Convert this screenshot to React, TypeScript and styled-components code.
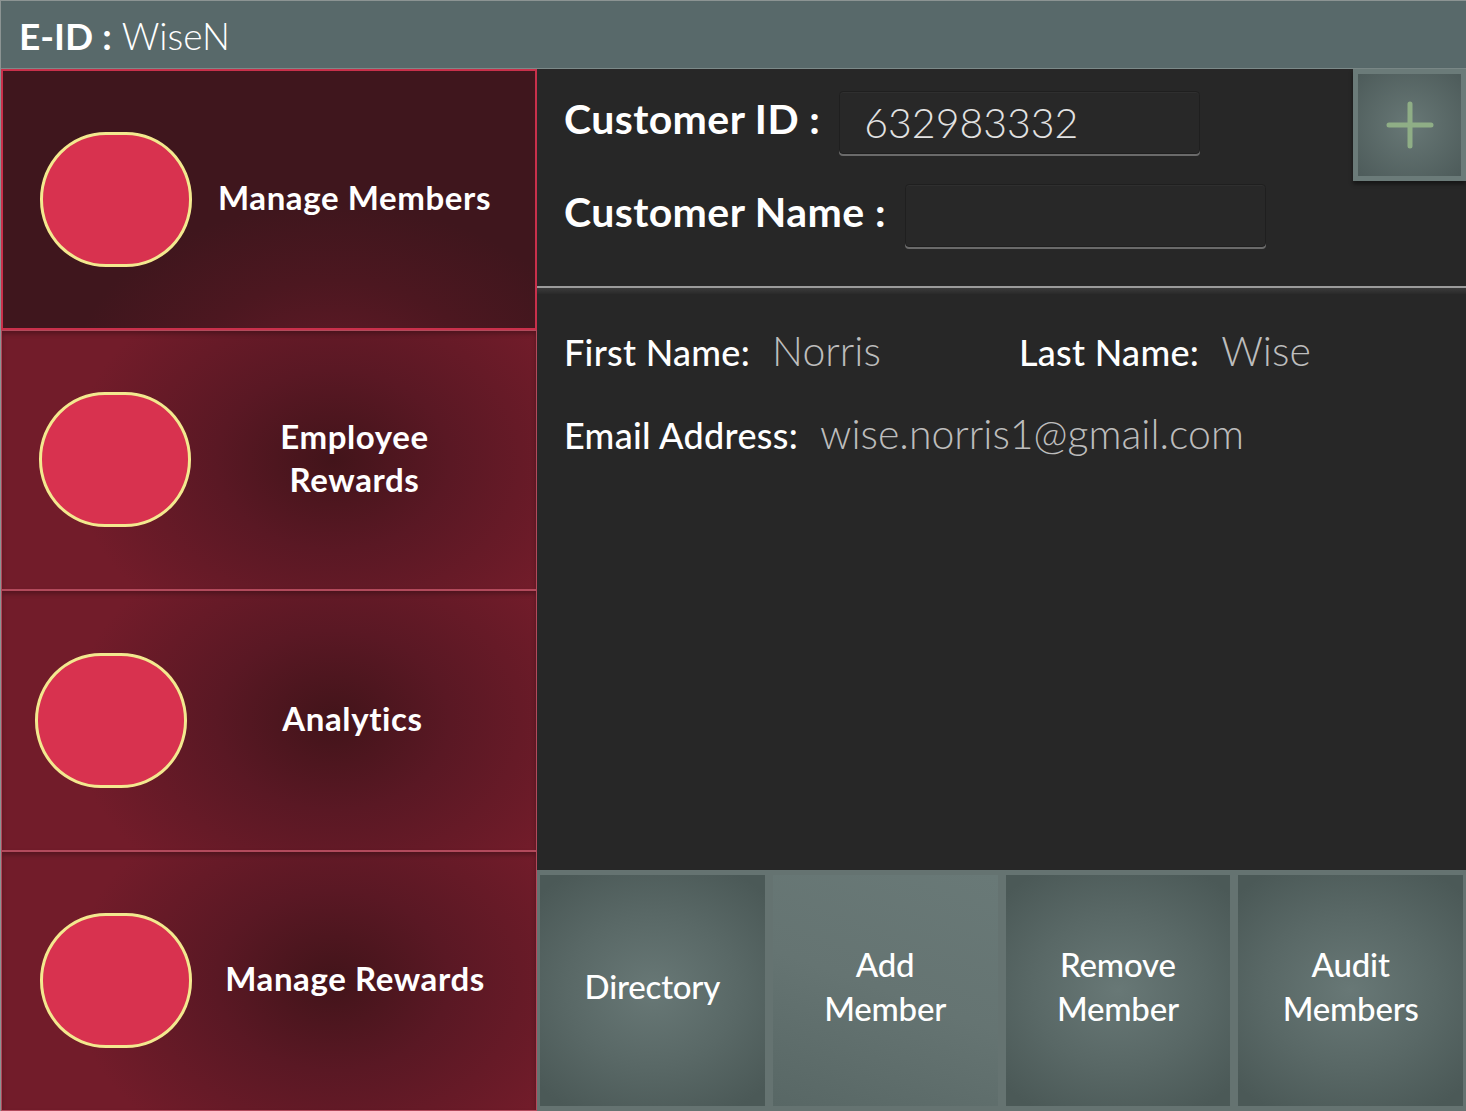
import React from "react";
import styled, { createGlobalStyle } from "styled-components";

const Global = createGlobalStyle`
  html, body { margin: 0; padding: 0; background: #272727; }
  body { font-family: "Lato", "Noto Sans", sans-serif; }
  * { box-sizing: border-box; }
`;

const Screen = styled.div`
  width: 1466px;
  height: 1111px;
  display: grid;
  grid-template-rows: 68px 1fr;
  overflow: hidden;
  border-top: 1px solid #8c9493;
  border-left: 1px solid #8c9493;
`;

const Header = styled.header`
  background: #58696a;
  display: flex;
  align-items: center;
  padding: 2px 0 0 18px;
  color: #ffffff;
  font-size: 37px;
  border-bottom: 1px solid #7c8a89;
`;

const HeaderKey = styled.span`
  font-weight: 700;
  margin-right: 10px;
`;

const HeaderValue = styled.span`
  font-weight: 300;
`;

const Body = styled.div`
  display: grid;
  grid-template-columns: 536px 1fr;
  min-height: 0;
`;

const Nav = styled.nav`
  display: grid;
  grid-template-rows: repeat(4, 1fr);
`;

const NavItem = styled.div<{ $active?: boolean; $offset?: number }>`
  display: flex;
  align-items: center;
  padding-left: ${(p) => p.$offset ?? 37}px;
  background: ${(p) =>
    p.$active
      ? "radial-gradient(ellipse 260px 170px at 62% 118%, #621a27 0%, #4c1720 55%, #3f161d 100%)"
      : "radial-gradient(ellipse 260px 200px at 62% 50%, #42141a 0%, #5a1824 45%, #721c2a 100%)"};
  border: ${(p) => (p.$active ? "2px solid #c9304b" : "1px solid #b24a5c")};
  box-shadow: ${(p) => (p.$active ? "none" : "inset 0 3px 4px rgba(0,0,0,0.25)")};
`;

const Blob = styled.div`
  width: 152px;
  height: 135px;
  flex: none;
  background: #d8324f;
  border: 3px solid #f3e98f;
  border-radius: 66px / 67px;
`;

const NavLabel = styled.div`
  flex: 1;
  text-align: center;
  padding-right: 18px;
  color: #ffffff;
  font-size: 33px;
  font-weight: 700;
  line-height: 43px;
  letter-spacing: 0.6px;
  margin-top: -4px;
`;

const Main = styled.main`
  display: flex;
  flex-direction: column;
  background: #272727;
  min-height: 0;
`;

const FormArea = styled.section`
  height: 217px;
  display: flex;
  justify-content: space-between;
  flex: none;
`;

const FormFields = styled.div`
  display: flex;
  flex-direction: column;
  padding: 22px 0 0 27px;
  gap: 30px;
`;

const FieldRow = styled.div`
  display: flex;
  align-items: center;
  gap: 19px;
`;

const FieldLabel = styled.label`
  color: #ffffff;
  font-size: 41px;
  font-weight: 700;
  letter-spacing: 0.4px;
  white-space: nowrap;
  margin-top: -8px;
`;

const InputBox = styled.div`
  width: 361px;
  height: 63px;
  background: #282828;
  border: 1px solid #1f1f1f;
  border-radius: 4px;
  box-shadow: 0 2px 0 #6a6a6a, inset 0 1px 1px rgba(255,255,255,0.04);
  display: flex;
  align-items: center;
  padding-left: 24px;
  color: #e2e2e2;
  font-size: 41px;
  font-weight: 300;
`;

const AddButton = styled.button`
  width: 113px;
  height: 112px;
  padding: 5px;
  border: none;
  background: #6b7b79;
  box-shadow: 0 3px 4px rgba(0,0,0,0.45);
  cursor: pointer;
`;

const AddButtonInner = styled.div`
  width: 100%;
  height: 100%;
  background: radial-gradient(circle at 50% 50%, #687876 0%, #4d5b5a 100%);
  display: flex;
  align-items: center;
  justify-content: center;
`;

const Divider = styled.div`
  height: 8px;
  flex: none;
  border-top: 2px solid #9b9b9b;
  background: linear-gradient(#3a3a3a, #2a2a2a);
`;

const Details = styled.section`
  flex: 1;
  padding: 32px 0 0 27px;
  display: flex;
  flex-direction: column;
  gap: 34px;
`;

const DetailRow = styled.div`
  display: flex;
  align-items: baseline;
`;

const DetailItem = styled.div<{ $width?: number }>`
  display: flex;
  align-items: baseline;
  width: ${(p) => (p.$width ? `${p.$width}px` : "auto")};
  white-space: nowrap;
`;

const DetailKey = styled.span`
  color: #ffffff;
  font-size: 36px;
  font-weight: 500;
  letter-spacing: 0.3px;
  margin-right: 22px;
`;

const DetailValue = styled.span`
  color: #bdbdbd;
  font-size: 41px;
  font-weight: 300;
`;

const ActionBar = styled.div`
  height: 241px;
  flex: none;
  background: #657371;
  display: grid;
  grid-template-columns: repeat(4, 1fr);
  gap: 8px;
  padding: 5px 3px;
`;

const ActionButton = styled.button<{ $pressed?: boolean }>`
  border: none;
  background: ${(p) =>
    p.$pressed
      ? "linear-gradient(200deg, #697977 0%, #657472 50%, #586765 100%)"
      : "radial-gradient(ellipse 70% 60% at 50% 50%, #687876 0%, #596866 55%, #4b5957 100%)"};
  color: #ffffff;
  font-family: "Lato", "Noto Sans", sans-serif;
  font-size: 33px;
  font-weight: 500;
  line-height: 44px;
  letter-spacing: -0.2px;
  display: flex;
  align-items: center;
  justify-content: center;
  text-align: center;
  padding: 0 0 10px;
  cursor: pointer;
`;

const navItems = [
  { label: "Manage Members", active: true, offset: 37 },
  { label: "Employee\nRewards", offset: 37 },
  { label: "Analytics", offset: 33 },
  { label: "Manage Rewards", offset: 38 },
];

const actions = [
  { label: "Directory" },
  { label: "Add\nMember", pressed: true },
  { label: "Remove\nMember" },
  { label: "Audit\nMembers" },
];

const Lines: React.FC<{ text: string }> = ({ text }) => (
  <span>
    {text.split("\n").map((t, i, arr) => (
      <React.Fragment key={i}>
        {t}
        {i < arr.length - 1 && <br />}
      </React.Fragment>
    ))}
  </span>
);

export default function App() {
  return (
    <>
      <Global />
      <Screen>
        <Header>
          <HeaderKey>E-ID :</HeaderKey>
          <HeaderValue>WiseN</HeaderValue>
        </Header>
        <Body>
          <Nav>
            {navItems.map((n) => (
              <NavItem key={n.label} $active={n.active} $offset={n.offset}>
                <Blob />
                <NavLabel>
                  <Lines text={n.label} />
                </NavLabel>
              </NavItem>
            ))}
          </Nav>
          <Main>
            <FormArea>
              <FormFields>
                <FieldRow>
                  <FieldLabel>Customer ID :</FieldLabel>
                  <InputBox>632983332</InputBox>
                </FieldRow>
                <FieldRow>
                  <FieldLabel>Customer Name :</FieldLabel>
                  <InputBox />
                </FieldRow>
              </FormFields>
              <AddButton aria-label="Add customer">
                <AddButtonInner>
                  <svg width="48" height="48" viewBox="0 0 48 48">
                    <path
                      d="M24 3 V45 M3 24 H45"
                      stroke="#8fae86"
                      strokeWidth="5"
                      strokeLinecap="round"
                      fill="none"
                    />
                  </svg>
                </AddButtonInner>
              </AddButton>
            </FormArea>
            <Divider />
            <Details>
              <DetailRow>
                <DetailItem $width={455}>
                  <DetailKey>First Name:</DetailKey>
                  <DetailValue>Norris</DetailValue>
                </DetailItem>
                <DetailItem>
                  <DetailKey>Last Name:</DetailKey>
                  <DetailValue>Wise</DetailValue>
                </DetailItem>
              </DetailRow>
              <DetailRow>
                <DetailItem>
                  <DetailKey>Email Address:</DetailKey>
                  <DetailValue>wise.norris1@gmail.com</DetailValue>
                </DetailItem>
              </DetailRow>
            </Details>
            <ActionBar>
              {actions.map((a) => (
                <ActionButton key={a.label} $pressed={a.pressed}>
                  <Lines text={a.label} />
                </ActionButton>
              ))}
            </ActionBar>
          </Main>
        </Body>
      </Screen>
    </>
  );
}
